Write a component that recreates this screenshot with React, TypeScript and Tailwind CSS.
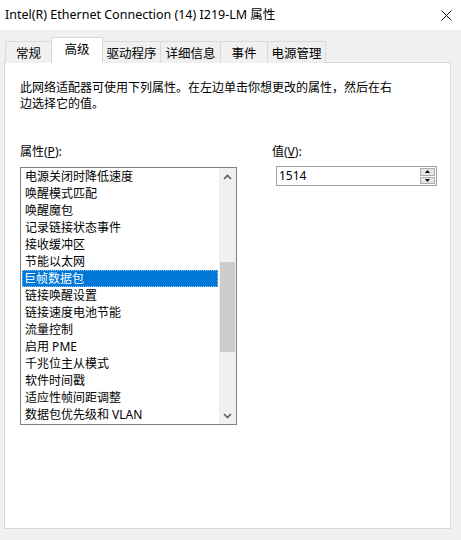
const FONT = { fontFamily: '"Noto Sans", "Noto Sans CJK SC", sans-serif' };

const tabs = ['常规', '高级', '驱动程序', '详细信息', '事件', '电源管理'];
const tabWidths = ['w-[47px]', 'w-[52px]', 'w-[59px]', 'w-[61px]', 'w-[48px]', 'w-[59px]'];

const properties = [
  '电源关闭时降低速度',
  '唤醒模式匹配',
  '唤醒魔包',
  '记录链接状态事件',
  '接收缓冲区',
  '节能以太网',
  '巨帧数据包',
  '链接唤醒设置',
  '链接速度电池节能',
  '流量控制',
  '启用 PME',
  '千兆位主从模式',
  '软件时间戳',
  '适应性帧间距调整',
  '数据包优先级和 VLAN',
];

function TabStrip() {
  return (
    <div className="flex items-end pl-[5px] h-[25px] relative z-10">
      {tabs.map((t, i) =>
        i === 1 ? (
          <div
            key={t}
            className={`${tabWidths[i]} h-[26px] -ml-px bg-white border border-b-0 border-[#d9d9d9] flex justify-center pt-[4px] text-[12.5px] leading-[16px] text-black relative z-10`}
          >
            {t}
          </div>
        ) : (
          <div
            key={t}
            className={`${tabWidths[i]} h-[22px] bg-[#f0f0f0] border border-b-0 border-[#d9d9d9] -ml-px first:ml-0 first:w-[47px] flex justify-center items-center pt-[2px] text-[12.5px] leading-[16px] text-black`}
          >
            {t}
          </div>
        )
      )}
    </div>
  );
}

function Chevron({ up }: { up?: boolean }) {
  return (
    <svg width="9" height="6" viewBox="0 0 9 6" className="block">
      <path
        d={up ? 'M1 5 L4.5 1.5 L8 5' : 'M1 1 L4.5 4.5 L8 1'}
        fill="none"
        stroke="#606060"
        strokeWidth="1.6"
      />
    </svg>
  );
}

function PropertyList() {
  return (
    <div className="w-[217px] h-[258px] border border-[#828282] bg-white flex">
      <div className="flex-1 flex flex-col">
        {properties.map((p, i) => (
          <div
            key={p}
            className={`h-[17px] mx-px pl-[2px] text-[12px] leading-[15px] whitespace-nowrap ${
              i === 6 ? 'bg-[#0078d7] text-white border border-dotted border-[#8fc0ee] pl-px' : 'text-black border border-transparent'
            }`}
          >
            {p}
          </div>
        ))}
      </div>
      <div className="w-[17px] bg-[#f0f0f0] flex flex-col items-center">
        <div className="h-[17px] flex items-center justify-center">
          <Chevron up />
        </div>
        <div className="flex-1 w-full px-px">
          <div className="mt-[77px] h-[90px] bg-[#cdcdcd]" />
        </div>
        <div className="h-[17px] flex items-center justify-center">
          <Chevron />
        </div>
      </div>
    </div>
  );
}

function SpinBox() {
  return (
    <div className="w-[161px] h-[20px] border border-[#a0a0a0] bg-white flex items-center">
      <span className="flex-1 pl-[2px] text-[12px] leading-[16px] text-black">1514</span>
      <div className="w-[15px] h-full flex flex-col gap-px py-px mr-px">
        <div className="flex-1 bg-[#e5e5e5] border border-[#adadad] flex items-center justify-center">
          <svg width="5" height="3" viewBox="0 0 5 3"><path d="M0 3 L2.5 0 L5 3Z" fill="#000" /></svg>
        </div>
        <div className="flex-1 bg-[#e5e5e5] border border-[#adadad] flex items-center justify-center">
          <svg width="5" height="3" viewBox="0 0 5 3"><path d="M0 0 L2.5 3 L5 0Z" fill="#000" /></svg>
        </div>
      </div>
    </div>
  );
}

export default function App() {
  return (
    <div style={FONT} className="w-[461px] h-[540px] bg-[#f0f0f0] flex flex-col overflow-hidden">
      {/* title bar */}
      <div className="h-[30px] bg-white flex items-center pl-[5px] pr-[9px]">
        <span className="flex-1 text-[12.5px] leading-[16px] text-black whitespace-nowrap">
          Intel(R) Ethernet Connection (14) I219-LM 属性
        </span>
        <svg width="11" height="11" viewBox="0 0 11 11">
          <path d="M0.5 0.5 L10.5 10.5 M10.5 0.5 L0.5 10.5" stroke="#111" strokeWidth="1" />
        </svg>
      </div>

      <div className="pt-[8px]">
        <TabStrip />
        <div className="ml-[4px] w-[447px] h-[467px] -mt-px bg-white border border-[#d9d9d9] pl-[15px] pt-[17px]">
          <p className="text-[12px] leading-[16px] text-black w-[380px]">
            此网络适配器可使用下列属性。在左边单击你想更改的属性，然后在右边选择它的值。
          </p>
          <div className="flex mt-[32px]">
            <div>
              <div className="text-[12px] leading-[16px] text-black mb-[7px]">
                属性(<span className="underline">P</span>):
              </div>
              <PropertyList />
            </div>
            <div className="ml-[35px]">
              <div className="text-[12px] leading-[16px] text-black mb-[6px]">
                值(<span className="underline">V</span>):
              </div>
              <div className="ml-[4px]">
                <SpinBox />
              </div>
            </div>
          </div>
        </div>
      </div>
    </div>
  );
}
